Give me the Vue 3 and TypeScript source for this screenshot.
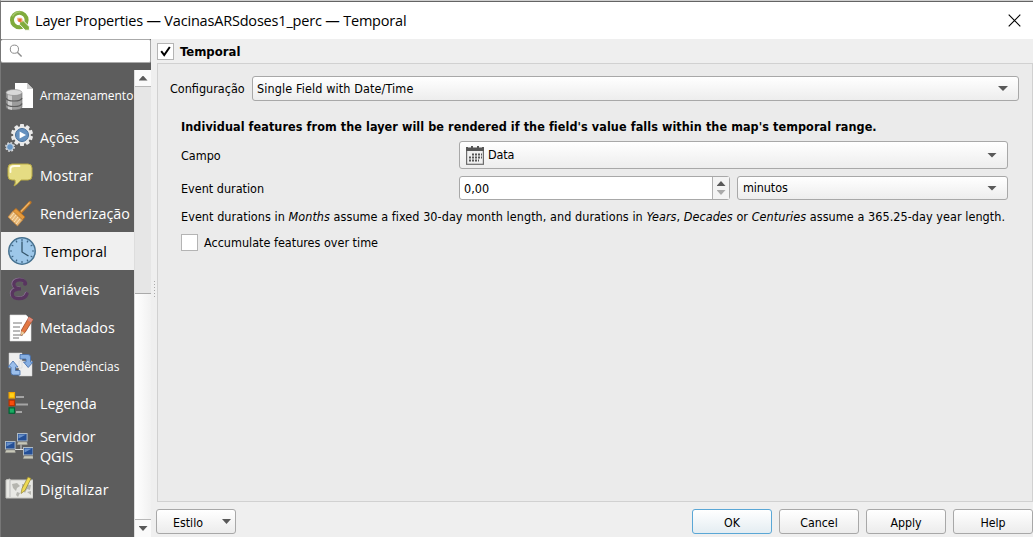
<script setup lang="ts">
import { ref } from 'vue'

interface Section {
  id: string
  label: string
  height: number
  small?: boolean
}

const sections: Section[] = [
  { id: 'storage', label: 'Armazenamento', height: 43, small: true },
  { id: 'actions', label: 'Ações', height: 39 },
  { id: 'display', label: 'Mostrar', height: 38 },
  { id: 'rendering', label: 'Renderização', height: 38 },
  { id: 'temporal', label: 'Temporal', height: 38 },
  { id: 'variables', label: 'Variáveis', height: 38 },
  { id: 'metadata', label: 'Metadados', height: 38 },
  { id: 'dependencies', label: 'Dependências', height: 38, small: true },
  { id: 'legend', label: 'Legenda', height: 38 },
  { id: 'server', label: 'Servidor QGIS', height: 47 },
  { id: 'digitizing', label: 'Digitalizar', height: 39 },
]
const active = ref('temporal')
const enabled = ref(true)
const ticks = Array.from({ length: 12 }, (_, i) => i * 30)
const teeth = Array.from({ length: 10 }, (_, i) => i * 36)
const actions = ['OK', 'Cancel', 'Apply', 'Help']
</script>

<template>
  <div class="window">
    <header class="titlebar">
      <svg class="logo" width="22" height="22" viewBox="0 0 22 22">
        <circle cx="10.3" cy="10" r="7.3" fill="none" stroke="#7fab3c" stroke-width="4" />
        <path d="M3.5 6.5a8 8 0 0 1 8-4.5" fill="none" stroke="#a3c66a" stroke-width="1.6" />
        <path d="M10.6 10.6h3.6l6.2 6.2v3.4h-4.2l-5.6-5.8z" fill="#7fab3c" stroke="#fff" stroke-width=".9" />
        <path d="M8.2 7.8h4.2l1.2 1.2v3.2h-3.4l-2-1.6z" fill="#f3b48c" />
        <path d="M9.4 8.8h3v3h-3z" fill="#e8702d" />
      </svg>
      <span class="title">Layer Properties — VacinasARSdoses1_perc — Temporal</span>
      <svg class="close" width="13" height="13" viewBox="0 0 13 13"><path d="M.7.7l11.6 11.6M12.3.7L.7 12.3" stroke="#000" stroke-width="1.15" /></svg>
    </header>

    <div class="body">
      <aside class="side">
        <div class="search">
          <svg width="14" height="14" viewBox="0 0 14 14" fill="none" stroke="#8b8b8b"><circle cx="5.4" cy="5.2" r="4.1" /><path d="M8.3 8.2l4.3 4.3" stroke-width="1.4" /></svg>
        </div>
        <div class="side-main">
          <nav class="list">
            <div v-for="s in sections" :key="s.id" class="item" :class="[s.id, { active: s.id === active, small: s.small }]" :style="{ height: s.height + 'px' }" @click="active = s.id">
              <svg v-if="s.id === 'storage'" class="ico" viewBox="0 0 28 28">
                <path d="M10 1h12l6 6v19H10z" fill="#fff" />
                <path d="M22 1l6 6h-6z" fill="#cfcfcf" />
                <path d="M1 11v14c0 4 16 4 16 0V11" fill="#9c9c9c" stroke="#6d6d6d" stroke-width=".6" />
                <path d="M3 12v15l4 1V12z" fill="#cdcdcd" />
                <ellipse cx="9" cy="10.5" rx="8" ry="3" fill="#d8d8d8" stroke="#888" stroke-width=".6" />
                <path d="M1 16c1 4 15 4 16 0M1 21.5c1 4 15 4 16 0" fill="none" stroke="#5e5e5e" stroke-width="1.2" />
              </svg>
              <svg v-else-if="s.id === 'actions'" class="ico" viewBox="0 0 28 28">
                <g transform="translate(17 11)">
                  <rect v-for="t in teeth" :key="t" x="-2" y="-11" width="4" height="5" rx=".7" fill="#e9e9e9" :transform="`rotate(${t})`" />
                  <circle r="8.9" fill="#e9e9e9" /><circle r="6.5" fill="#6591bf" stroke="#46709b" stroke-width="1" />
                  <path d="M-2.4-3.6L4 0l-6.4 3.6z" fill="#fff" />
                </g>
                <g transform="translate(5 23)">
                  <circle r="4.2" fill="none" stroke="#ddd" stroke-width="1.5" stroke-dasharray="1.8 1.5" />
                  <circle r="3.4" fill="#6897c6" stroke="#d9e0e6" stroke-width=".9" />
                </g>
              </svg>
              <svg v-else-if="s.id === 'display'" class="ico" viewBox="0 0 28 28">
                <path d="M7 2h16q4 0 4 4v8q0 4-4 4h-7q-3 4-7 6 2-3 1-6H7q-4 0-4-4V6q0-4 4-4z" fill="#e5dc83" stroke="#b7a947" />
                <path d="M5.5 10V7q0-3 4-3h5" fill="none" stroke="#fffbe1" stroke-width="1.8" stroke-linecap="round" />
              </svg>
              <svg v-else-if="s.id === 'rendering'" class="ico" viewBox="0 0 28 28">
                <path d="M16 12l9-9.5" stroke="#bd7625" stroke-width="3.2" stroke-linecap="round" /><path d="M16 11.5l8.6-9" stroke="#f0b76b" stroke-width="1.2" />
                <path d="M11 8.5l9 8.5-2.5 3L8 11z" fill="#e59b3c" stroke="#b26d24" />
                <path d="M8 11l9.5 9-5 6L3 17z" fill="#e7b775" stroke="#c48640" stroke-width=".7" />
                <path d="M5 18l4-5M7 20l4-5M9 22l4-5M11 24l4-5" stroke="#fae3bc" />
              </svg>
              <svg v-else-if="s.id === 'temporal'" class="ico clock" viewBox="0 0 30 30">
                <circle cx="15" cy="15" r="13.2" fill="#9dc7e9" stroke="#46718f" stroke-width="1.5" />
                <path v-for="t in ticks" :key="t" d="M15 3v2" stroke="#416785" stroke-width="1.2" :transform="`rotate(${t} 15 15)`" />
                <path d="M15 5.5V16l6.5 4" fill="none" stroke="#35566c" stroke-width="1.3" />
              </svg>
              <svg v-else-if="s.id === 'variables'" class="ico" viewBox="0 0 28 28">
                <g fill="none" stroke-linecap="round">
                  <path d="M20.6 7.5C19.5 2.6 8.6 2.6 8.8 8.2c.1 3.1 3.4 4.6 7.2 4.6-5 0-8.8 1.6-8.8 5.2 0 6.2 13 6.4 14.8-.2" stroke="#8d7696" stroke-width="3.2" transform="translate(-.8 -.5)" />
                  <path d="M20.6 7.5C19.5 2.6 8.6 2.6 8.8 8.2c.1 3.1 3.4 4.6 7.2 4.6-5 0-8.8 1.6-8.8 5.2 0 6.2 13 6.4 14.8-.2" stroke="#58355f" stroke-width="3.3" />
                </g>
                <circle cx="20" cy="7.8" r="2" fill="#58355f" />
              </svg>
              <svg v-else-if="s.id === 'metadata'" class="ico" viewBox="0 0 28 28">
                <path d="M5 1h16l5 5v21H5z" fill="#fff" stroke="#ddd" stroke-width=".6" />
                <path d="M8 9h9M8 13h7M8 17h7M8 21h10M8 24h6" stroke="#777" />
                <path d="M24 3l4 2.5-8 13-4 3 .5-5.5z" fill="#e47843" stroke="#9b4a28" stroke-width=".8" /><path d="M24 3l4 2.5-2 3-3.8-2.6z" fill="#dc897c" /><path d="M16.5 17l3 2-3.5 2.5z" fill="#e8d1a2" />
              </svg>
              <svg v-else-if="s.id === 'dependencies'" class="ico" viewBox="0 0 28 28">
                <path d="M4 1h13v15H4zM14 9h13v15H14z" fill="#eee" stroke="#ccc" stroke-width=".5" />
                <path d="M15 2.5h8q2.5 0 2.5 2.5v5H28l-4.8 5.5L18.500 10H21V7h-6z" fill="#86afe3" stroke="#416ca9" stroke-width=".8" />
                <path d="M15 23H8.500Q6 23 6 20.500V15H3l5-6 5 6h-2.500v3.500H15z" fill="#9bbfec" stroke="#416ca9" stroke-width=".8" />
              </svg>
              <svg v-else-if="s.id === 'legend'" class="ico" viewBox="0 0 28 28">
                <path d="M11 7h8M11 14.500h12M11 22h6" stroke="#a5a5a5" stroke-width="2" />
                <g stroke-width="1.2"><rect x="4.100" y="2.600" width="5.400" height="5.400" fill="#ffd21a" stroke="#f2a500" /><rect x="4.100" y="10.200" width="5.400" height="5.400" fill="#fa4c0d" stroke="#b83300" /><rect x="4.100" y="17.900" width="5.400" height="5.400" fill="#19ac63" stroke="#006335" /></g>
              </svg>
              <svg v-else-if="s.id === 'server'" class="ico" viewBox="0 0 28 28">
                <path d="M10 16.500h12M16 11v6" stroke="#ddd" />
                <g v-for="(p, i) in [[12, 0], [0, 8], [18, 14]]" :key="i" :transform="`translate(${p[0]} ${p[1]})`">
                  <rect x=".5" y=".5" width="9.600" height="7.500" fill="#244f96" stroke="#aebac4" /><path d="M1.500 1.500h7.500L1.500 5.500z" fill="#6890c8" /><path d="M1 9h9l.5 2.800H0z" fill="#c8c8b8" stroke="#777" stroke-width=".4" />
                </g>
              </svg>
              <svg v-else class="ico" viewBox="0 0 28 28">
                <path d="M1 4l4-1v1h23v18H1z" fill="#e8e8e4" stroke="#c6c6c2" /><path d="M5 4v17" stroke="#bbb" />
                <path d="M7 8l5-1 3 3-3 2-1 3-3-3zM17 8l9 1-1 5-3-1-2 4-3-4zM12 16l3 1-2 4-2-2zM22 16l4-1v4z" fill="#b5b5af" />
                <path d="M23 1l3 1.500-6 12-4 3 1-5z" fill="#eed952" stroke="#918434" stroke-width=".7" />
              </svg>
              <span class="label">{{ s.label }}</span>
            </div>
          </nav>
          <div class="scroll">
            <div class="sbtn"><i class="tri up"></i></div>
            <div class="thumb"></div>
            <div class="track"></div>
            <div class="sbtn bottom"><i class="tri"></i></div>
          </div>
        </div>
      </aside>
      <div class="splitter"><i v-for="n in 6" :key="n"></i></div>

      <main class="main">
        <div class="group-title" @click="enabled = !enabled">
          <span class="check"><svg v-if="enabled" width="11" height="11" viewBox="0 0 11 11"><path d="M1.2 5.2L4.2 9 9.8 1" fill="none" stroke="#000" stroke-width="2" /></svg></span>
          <b>Temporal</b>
        </div>
        <section class="group">
          <div class="row config">
            <span class="t-config">Configuração</span>
            <div class="combo"><span class="wide">Single Field with Date/Time</span><i class="tri"></i></div>
          </div>
          <div class="details">
            <p class="headline">Individual features from the layer will be rendered if the field's value falls within the map's temporal range.</p>
            <div class="row field">
              <span class="cap">Campo</span>
              <div class="combo">
                <svg class="cal" width="18" height="19" viewBox="0 0 18 19">
                  <rect x=".6" y="2" width="16.8" height="16.3" fill="#f0f0f0" stroke="#6c6c6c" stroke-width="1.2" />
                  <path d="M0 1h2v1h3V0h2v2h4V0h2v2h3V1h2v4H0z" fill="#555" />
                  <path d="M6 8.500h10M3 11.500h13M3 14.500h10" stroke="#555" stroke-width="2" stroke-dasharray="2 1" />
                </svg>
                <span class="tight">Data</span><i class="tri"></i>
              </div>
            </div>
            <div class="row duration">
              <span class="cap">Event duration</span>
              <div class="spin"><span>0,00</span><div class="steps"><i class="tri up"></i><i class="tri dim"></i></div></div>
              <div class="combo unit"><span class="tight">minutos</span><i class="tri"></i></div>
            </div>
            <p class="note">Event durations in <em>Months</em> assume a fixed 30-day month length, and durations in <em>Years</em>, <em>Decades</em> or <em>Centuries</em> assume a 365.25-day year length.</p>
            <div class="accumulate"><span class="check"></span><span>Accumulate features over time</span></div>
          </div>
        </section>
        <footer class="footer">
          <button class="btn style"><span>Estilo</span><i class="tri"></i></button>
          <button v-for="a in actions" :key="a" class="btn" :class="{ primary: a === 'OK' }">{{ a }}</button>
        </footer>
      </main>
    </div>
  </div>
</template>

<style>
body { margin: 0; overflow: hidden; }
</style>

<style scoped>
* { box-sizing: border-box; }
.window { width: 1033px; height: 537px; background: #efefef; border-top: 1px solid #d0d0d0; border-left: 1px solid #777; overflow: hidden; font: 12.5px/16px "DejaVu Sans Condensed", "DejaVu Sans", sans-serif; font-stretch: condensed; color: #000; display: flex; flex-direction: column; white-space: nowrap; }
.titlebar { height: 38px; flex: none; background: #fff; border-top: 1px solid #646464; display: flex; align-items: center; padding: 0 12px 0 8px; }
.logo { flex: none; margin-right: 4px; }
.title { font: 14.5px/20px "Open Sans", sans-serif; letter-spacing: -.19px; }
.close { margin-left: auto; }
.body { flex: 1; display: flex; min-height: 0; }
.side { width: 150px; display: flex; flex-direction: column; background: #5d5d5d; }
.search { height: 24px; flex: none; background: #fff; border: 1px solid #aaa; border-left: 0; border-radius: 2px; padding: 4px 8px; margin-bottom: 7px; display: flex; }
.side-main { flex: 1; display: flex; min-height: 0; }
.list { width: 133px; padding-top: 4px; }
.item { display: flex; align-items: center; padding: 2px 0 0 4px; color: #fff; font: 14.3px/20px "Open Sans", sans-serif; }
.item.small { font-size: 12px; }
.item.storage { padding-top: 0; }
.item.dependencies .label { padding-top: 2px; }
.item.active { background: #f0f0f0; color: #000; padding-top: 0; }
.item.active .label { padding-top: 2px; }
.item.server .label { white-space: normal; width: 70px; }
.item.digitizing .label { letter-spacing: .25px; }
.ico { width: 28px; height: 28px; flex: none; margin-right: 7px; }
.clock { width: 30px; height: 30px; margin: 0 6px 0 2px; }
.scroll { width: 17px; background: #fff; display: flex; flex-direction: column; border-left: 1px solid #ddd; }
.sbtn { height: 17px; flex: none; background: #fafafa; border-bottom: 1px solid #b8b8b8; display: flex; align-items: center; justify-content: center; }
.sbtn.bottom { border: 0; border-top: 1px solid #b8b8b8; height: 18px; }
.thumb { height: 207px; flex: none; background: #e6e6e6; border-bottom: 1px solid #aaa; }
.track { flex: 1; background: linear-gradient(90deg, #fff, #f1f1f1); }
.splitter { width: 5px; display: flex; flex-direction: column; align-items: flex-end; gap: 2px; padding: 242px 1px 0 0; }
.splitter i { width: 1px; height: 1px; background: #aaa; }
.tri { width: 9px; height: 5px; background: #595959; clip-path: polygon(0 0, 100% 0, 50% 100%); flex: none; }
.tri.up { clip-path: polygon(50% 0, 100% 100%, 0 100%); }
.tri.dim { background: #aaa; }
.main { flex: 1; min-width: 0; display: flex; flex-direction: column; }
.group-title { height: 24px; display: flex; align-items: center; gap: 6px; padding-left: 1px; flex: none; }
.group-title b { font-size: 13px; padding-top: 2px; }
.check { width: 17px; height: 17px; border: 1px solid #b4b4b4; background: #fff; display: flex; align-items: center; justify-content: center; flex: none; }
.group { height: 439px; flex: none; margin-left: 1px; border: 1px solid #d1d1d1; background: #ebebeb; }
.row { display: flex; align-items: center; }
.config { padding: 12px 13px 0 12px; height: 37px; align-items: stretch; }
.config > span { width: 82px; line-height: 25px; }
.wide { letter-spacing: .12px; }
.tight { letter-spacing: -.12px; }
.combo { flex: 1; border: 1px solid #a8a8a8; border-radius: 3px; background: linear-gradient(#fff, #ededed); display: flex; align-items: center; padding: 0 10px 0 4px; }
.combo .tri { margin-left: auto; width: 10px; }
.details { padding: 17px 24px 0 23px; }
p { margin: 0; }
.headline { font-weight: bold; height: 22px; line-height: 18px; letter-spacing: .08px; }
.field { height: 28px; margin-top: 1px; }
.field .combo { height: 28px; padding-left: 5px; }
.field .cap, .duration .cap { padding-top: 2px; }
.duration .spin > span { padding-top: 2px; }
.cal { margin: 0 4px 0 1px; }
.cap { width: 278px; flex: none; }
.duration { height: 24px; margin-top: 7px; }
.duration .combo { height: 24px; padding-left: 5px; }
.spin { width: 271px; height: 24px; margin-right: 7px; border: 1px solid #a8a8a8; border-radius: 3px; background: #fff; display: flex; align-items: center; justify-content: space-between; padding-left: 4px; flex: none; }
.steps { width: 17px; height: 22px; border-left: 1px solid #b0b0b0; background: #f4f4f4; display: flex; flex-direction: column; justify-content: center; align-items: center; gap: 4px; }
.note { margin-top: 9px; height: 17px; letter-spacing: .06px; }
.accumulate { display: flex; align-items: center; gap: 6px; margin-top: 7px; }
.accumulate span:last-child { padding-top: 2px; }
.footer { display: flex; margin-top: 7px; gap: 7px; }
.btn { width: 80px; height: 25px; border: 1px solid #a8a8a8; border-radius: 3px; background: linear-gradient(#fff, #ececec); font: inherit; font-size: 12.3px; color: #000; padding: 2px 0 0; flex: none; }
.btn.style { display: flex; align-items: center; justify-content: space-between; padding: 0 4px 0 16px; margin-right: auto; }
.btn.style span { padding-top: 2px; }
.btn.primary { border-color: #5aa7d6; background: linear-gradient(#fff, #e4edf2); }
</style>
